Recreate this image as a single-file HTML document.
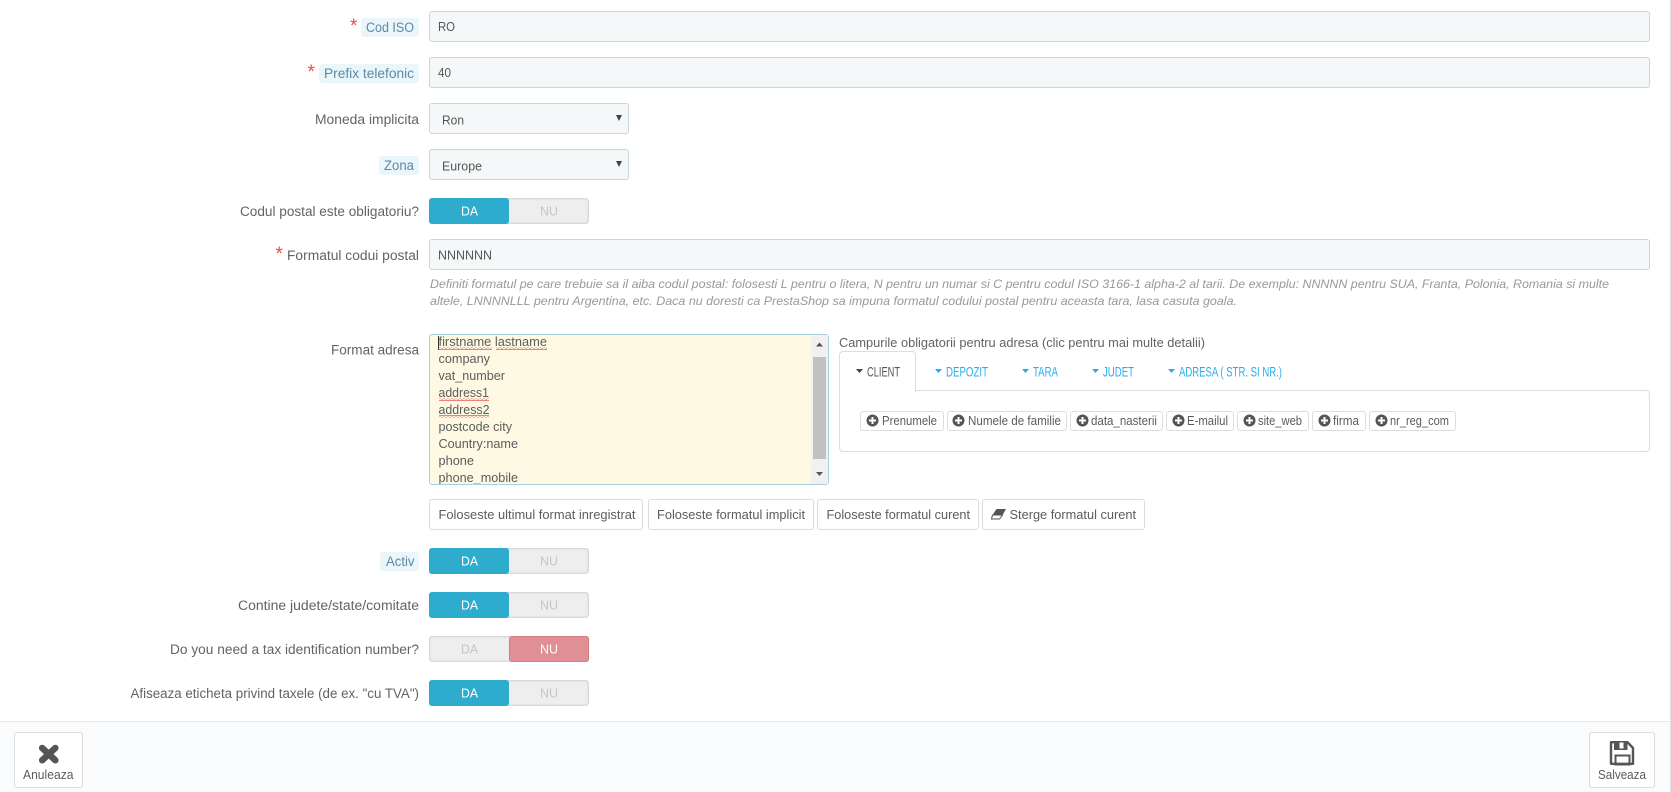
<!DOCTYPE html>
<html><head><meta charset="utf-8"><title>Tara</title>
<style>
html,body{margin:0;padding:0;background:#fff}
body{position:relative;width:1671px;height:792px;overflow:hidden;font-family:"Liberation Sans",sans-serif}
.b{position:absolute;box-sizing:border-box}
.in{background:#f5f8f9;border:1px solid #c7d6db;border-radius:3px;height:31px;left:429px}
.hl{background:#ebf6fb;border-radius:3px;height:19px}
.btn{background:#fff;border:1px solid #dcdcdc;border-radius:3px;height:31px;top:499px}
.chip{background:#fff;border:1px solid #ddd;border-radius:3px;height:20px;top:411px}
.sw{left:429px;width:160px;height:26px;background:#eee;border:1px solid #dadada;border-radius:3px;box-shadow:inset 0 0 2px #d4d4d4}
.on{position:absolute;left:429px;width:80px;height:26px;background:#2eacce;border-radius:3px}
.red{position:absolute;left:509px;width:80px;height:26px;background:#e08f95;border:1px solid #d27c82;box-sizing:border-box;border-radius:3px}
svg{position:absolute;left:0;top:0}
text{font-family:"Liberation Sans",sans-serif;font-size:13.5px;fill:#636363;white-space:pre}
.t{fill:#555;font-size:13px}
.h{fill:#5b8aa6}
.s{fill:#f0484c;font-size:19px}
.sm{font-size:12.8px;fill:#5c5c5c}
.d{font-size:12px;font-style:italic;fill:#999}
.w{fill:#fff;font-size:13px}
.g{fill:#c6c6c6;font-size:13px}
.tab{fill:#25aeed;font-size:14px}
</style></head><body>

<div class="b in" style="top:11px;width:1221px"></div>
<div class="b in" style="top:57px;width:1221px"></div>
<div class="b in" style="top:103px;width:200px"></div>
<div class="b in" style="top:149px;width:200px"></div>
<div class="b in" style="top:239px;width:1221px"></div>

<div class="b hl" style="left:361px;top:18px;width:58px"></div>
<div class="b hl" style="left:319px;top:64px;width:100px"></div>
<div class="b hl" style="left:379px;top:156px;width:40px"></div>
<div class="b hl" style="left:380px;top:552px;width:39px"></div>

<div class="b sw" style="top:198px"></div><div class="on" style="top:198px"></div>
<div class="b sw" style="top:548px"></div><div class="on" style="top:548px"></div>
<div class="b sw" style="top:592px"></div><div class="on" style="top:592px"></div>
<div class="b sw" style="top:636px"></div><div class="red" style="top:636px"></div>
<div class="b sw" style="top:680px"></div><div class="on" style="top:680px"></div>

<div class="b" style="left:429px;top:334px;width:400px;height:151px;background:#fef9e2;border:1px solid #a9cfe3;border-radius:3px"></div>
<div class="b" style="left:811px;top:335px;width:17px;height:149px;background:#f1f1f1"></div>
<div class="b" style="left:813px;top:357px;width:13px;height:102px;background:#c1c1c1"></div>

<div class="b" style="left:839px;top:390px;width:811px;height:62px;background:#fff;border:1px solid #ddd;border-radius:4px"></div>
<div class="b" style="left:839px;top:351px;width:77px;height:41px;background:#fff;border:1px solid #ddd;border-bottom:0;border-radius:4px 4px 0 0"></div>

<div class="b chip" style="left:860px;width:84px"></div>
<div class="b chip" style="left:947px;width:120px"></div>
<div class="b chip" style="left:1070px;width:93px"></div>
<div class="b chip" style="left:1166px;width:68px"></div>
<div class="b chip" style="left:1237px;width:72px"></div>
<div class="b chip" style="left:1312px;width:54px"></div>
<div class="b chip" style="left:1369px;width:87px"></div>

<div class="b btn" style="left:429px;width:214px"></div>
<div class="b btn" style="left:648px;width:166px"></div>
<div class="b btn" style="left:817px;width:162px"></div>
<div class="b btn" style="left:982px;width:163px"></div>

<div class="b" style="left:0;top:721px;width:1671px;height:71px;background:#fafbfc;border-top:1px solid #e6e9ec"></div>
<div class="b" style="left:14px;top:732px;width:69px;height:56px;background:#fff;border:1px solid #dcdcdc;border-radius:3px"></div>
<div class="b" style="left:1589px;top:732px;width:66px;height:56px;background:#fff;border:1px solid #dcdcdc;border-radius:3px"></div>
<div class="b" style="left:1670px;top:0;width:1px;height:792px;background:#dde0e3"></div>

<svg width="1671" height="792" viewBox="0 0 1671 792">
<defs>
<pattern id="sq" width="4" height="3" patternUnits="userSpaceOnUse"><path d="M0 2.200L2 .800L4 2.200" fill="none" stroke="#e8555a" stroke-width="1"/></pattern>
</defs>
<!-- labels -->
<text class="s" x="350" y="32">*</text>
<text class="h" x="366" y="32" textLength="48" lengthAdjust="spacingAndGlyphs">Cod ISO</text>
<text class="s" x="307.500" y="78">*</text>
<text class="h" x="324" y="78" textLength="90" lengthAdjust="spacingAndGlyphs">Prefix telefonic</text>
<text x="315" y="124" textLength="104" lengthAdjust="spacingAndGlyphs">Moneda implicita</text>
<text class="h" x="384" y="170" textLength="30" lengthAdjust="spacingAndGlyphs">Zona</text>
<text x="240" y="216" textLength="179" lengthAdjust="spacingAndGlyphs">Codul postal este obligatoriu?</text>
<text class="s" x="275.500" y="260">*</text>
<text x="287" y="260" textLength="132" lengthAdjust="spacingAndGlyphs">Formatul codui postal</text>
<text x="331" y="354.500" textLength="88" lengthAdjust="spacingAndGlyphs">Format adresa</text>
<text class="h" x="386" y="566" textLength="28.500" lengthAdjust="spacingAndGlyphs">Activ</text>
<text x="238" y="610" textLength="181" lengthAdjust="spacingAndGlyphs">Contine judete/state/comitate</text>
<text x="170" y="654" textLength="249" lengthAdjust="spacingAndGlyphs">Do you need a tax identification number?</text>
<text x="130.500" y="698" textLength="288.500" lengthAdjust="spacingAndGlyphs">Afiseaza eticheta privind taxele (de ex. "cu TVA")</text>

<!-- inputs -->
<text class="t" x="438" y="31" textLength="17" lengthAdjust="spacingAndGlyphs">RO</text>
<text class="t" x="438" y="77" textLength="13" lengthAdjust="spacingAndGlyphs">40</text>
<text class="t" x="442" y="124.500" textLength="22" lengthAdjust="spacingAndGlyphs">Ron</text>
<path d="M616 115h6l-3 6z" fill="#444"/>
<text class="t" x="442" y="170.500" textLength="40" lengthAdjust="spacingAndGlyphs">Europe</text>
<path d="M616 161h6l-3 6z" fill="#444"/>
<text class="t" x="438" y="259.500" textLength="54" lengthAdjust="spacingAndGlyphs">NNNNNN</text>

<!-- switch text -->
<text class="w" x="461" y="215.500" textLength="17" lengthAdjust="spacingAndGlyphs">DA</text>
<text class="g" x="540" y="215.500" textLength="18" lengthAdjust="spacingAndGlyphs">NU</text>
<text class="w" x="461" y="565.500" textLength="17" lengthAdjust="spacingAndGlyphs">DA</text>
<text class="g" x="540" y="565.500" textLength="18" lengthAdjust="spacingAndGlyphs">NU</text>
<text class="w" x="461" y="609.500" textLength="17" lengthAdjust="spacingAndGlyphs">DA</text>
<text class="g" x="540" y="609.500" textLength="18" lengthAdjust="spacingAndGlyphs">NU</text>
<text class="g" x="461" y="653.500" textLength="17" lengthAdjust="spacingAndGlyphs">DA</text>
<text class="w" x="540" y="653.500" textLength="18" lengthAdjust="spacingAndGlyphs">NU</text>
<text class="w" x="461" y="697.500" textLength="17" lengthAdjust="spacingAndGlyphs">DA</text>
<text class="g" x="540" y="697.500" textLength="18" lengthAdjust="spacingAndGlyphs">NU</text>

<!-- help -->
<text class="d" x="430" y="288" textLength="1179" lengthAdjust="spacingAndGlyphs">Definiti formatul pe care trebuie sa il aiba codul postal: folosesti L pentru o litera, N pentru un numar si C pentru codul ISO 3166-1 alpha-2 al tarii. De exemplu: NNNNN pentru SUA, Franta, Polonia, Romania si multe</text>
<text class="d" x="430" y="305" textLength="807" lengthAdjust="spacingAndGlyphs">altele, LNNNNLLL pentru Argentina, etc. Daca nu doresti ca PrestaShop sa impuna formatul codului postal pentru aceasta tara, lasa casuta goala.</text>

<!-- textarea -->
<svg x="430" y="335" width="381" height="149" viewBox="430 335 381 149">
<text class="sm" x="438.500" y="346" textLength="108.500" lengthAdjust="spacingAndGlyphs">firstname lastname</text>
<text class="sm" x="438.500" y="363" textLength="51.500" lengthAdjust="spacingAndGlyphs">company</text>
<text class="sm" x="438.500" y="380" textLength="66.500" lengthAdjust="spacingAndGlyphs">vat_number</text>
<text class="sm" x="438.500" y="397" textLength="50.500" lengthAdjust="spacingAndGlyphs">address1</text>
<text class="sm" x="438.500" y="414" textLength="51" lengthAdjust="spacingAndGlyphs">address2</text>
<text class="sm" x="438.500" y="431" textLength="73.500" lengthAdjust="spacingAndGlyphs">postcode city</text>
<text class="sm" x="438.500" y="448" textLength="79.500" lengthAdjust="spacingAndGlyphs">Country:name</text>
<text class="sm" x="438.500" y="465" textLength="35.500" lengthAdjust="spacingAndGlyphs">phone</text>
<text class="sm" x="438.500" y="482" textLength="79.500" lengthAdjust="spacingAndGlyphs">phone_mobile</text>
<path d="M438.500 336v14" stroke="#333" stroke-width="1"/>
<rect x="439" y="347" width="53" height="3" fill="url(#sq)"/>
<rect x="496" y="347" width="51" height="3" fill="url(#sq)"/>
<rect x="439" y="398" width="50" height="3" fill="url(#sq)"/>
<rect x="439" y="415" width="50" height="3" fill="url(#sq)"/>
</svg>
<path d="M816 346.500l3.500-4 3.500 4z" fill="#555"/>
<path d="M816 472h7l-3.500 4z" fill="#555"/>

<!-- tabs -->
<text x="839" y="347" textLength="366" lengthAdjust="spacingAndGlyphs" style="font-size:12.800px">Campurile obligatorii pentru adresa (clic pentru mai multe detalii)</text>
<path d="M856 369h7l-3.500 4z" fill="#444"/>
<text x="867" y="376.500" textLength="33" lengthAdjust="spacingAndGlyphs" style="fill:#555;font-size:14px">CLIENT</text>
<path d="M935 369h7l-3.500 4z" fill="#25aeed"/>
<text class="tab" x="946" y="376.500" textLength="42" lengthAdjust="spacingAndGlyphs">DEPOZIT</text>
<path d="M1022 369h7l-3.500 4z" fill="#25aeed"/>
<text class="tab" x="1033" y="376.500" textLength="25" lengthAdjust="spacingAndGlyphs">TARA</text>
<path d="M1092 369h7l-3.500 4z" fill="#25aeed"/>
<text class="tab" x="1103" y="376.500" textLength="31" lengthAdjust="spacingAndGlyphs">JUDET</text>
<path d="M1168 369h7l-3.500 4z" fill="#25aeed"/>
<text class="tab" x="1179" y="376.500" textLength="103" lengthAdjust="spacingAndGlyphs">ADRESA ( STR. SI NR.)</text>

<!-- chips -->
<g fill="#555">
<circle cx="872.500" cy="420.500" r="6"/><circle cx="958.500" cy="420.500" r="6"/><circle cx="1082.500" cy="420.500" r="6"/><circle cx="1178.500" cy="420.500" r="6"/><circle cx="1249.500" cy="420.500" r="6"/><circle cx="1324.500" cy="420.500" r="6"/><circle cx="1381.500" cy="420.500" r="6"/>
</g>
<path d="M869 420.500h7M872.500 417v7M955 420.500h7M958.500 417v7M1079 420.500h7M1082.500 417v7M1175 420.500h7M1178.500 417v7M1246 420.500h7M1249.500 417v7M1321 420.500h7M1324.500 417v7M1378 420.500h7M1381.500 417v7" stroke="#fff" stroke-width="2"/>
<text class="sm" x="882" y="425" textLength="55" lengthAdjust="spacingAndGlyphs">Prenumele</text>
<text class="sm" x="968" y="425" textLength="93" lengthAdjust="spacingAndGlyphs">Numele de familie</text>
<text class="sm" x="1091" y="425" textLength="66" lengthAdjust="spacingAndGlyphs">data_nasterii</text>
<text class="sm" x="1187" y="425" textLength="41" lengthAdjust="spacingAndGlyphs">E-mailul</text>
<text class="sm" x="1258" y="425" textLength="44" lengthAdjust="spacingAndGlyphs">site_web</text>
<text class="sm" x="1333" y="425" textLength="26" lengthAdjust="spacingAndGlyphs">firma</text>
<text class="sm" x="1390" y="425" textLength="59" lengthAdjust="spacingAndGlyphs">nr_reg_com</text>

<!-- buttons -->
<text class="sm" x="438.500" y="519" textLength="197" lengthAdjust="spacingAndGlyphs">Foloseste ultimul format inregistrat</text>
<text class="sm" x="657" y="519" textLength="148" lengthAdjust="spacingAndGlyphs">Foloseste formatul implicit</text>
<text class="sm" x="826.500" y="519" textLength="143.500" lengthAdjust="spacingAndGlyphs">Foloseste formatul curent</text>
<text class="sm" x="1009.500" y="519" textLength="126.500" lengthAdjust="spacingAndGlyphs">Sterge formatul curent</text>
<path d="M996.500 509H1006L1002.500 515H992.500Z" fill="#555"/>
<path d="M992.500 515H1002.500L999.500 519H991.500Z" fill="#fff" stroke="#555" stroke-width="1"/>

<!-- footer -->
<path d="M42.200 748L55.300 760.300M55.300 748L42.200 760.300" stroke="#555" stroke-width="6.500" stroke-linecap="round"/>
<text class="sm" x="23" y="779" textLength="50.500" lengthAdjust="spacingAndGlyphs">Anuleaza</text>
<path d="M1611 742.200H1627.500L1633 748V763.800H1611Z" fill="none" stroke="#555" stroke-width="2.400" stroke-linejoin="round"/>
<rect x="1614" y="741" width="13.500" height="9" fill="#555"/>
<rect x="1619.500" y="742.500" width="4" height="6" fill="#fff"/>
<rect x="1615.500" y="755.500" width="14" height="9" fill="none" stroke="#555" stroke-width="2"/>
<text class="sm" x="1598" y="779" textLength="48" lengthAdjust="spacingAndGlyphs">Salveaza</text>
</svg>
</body></html>
